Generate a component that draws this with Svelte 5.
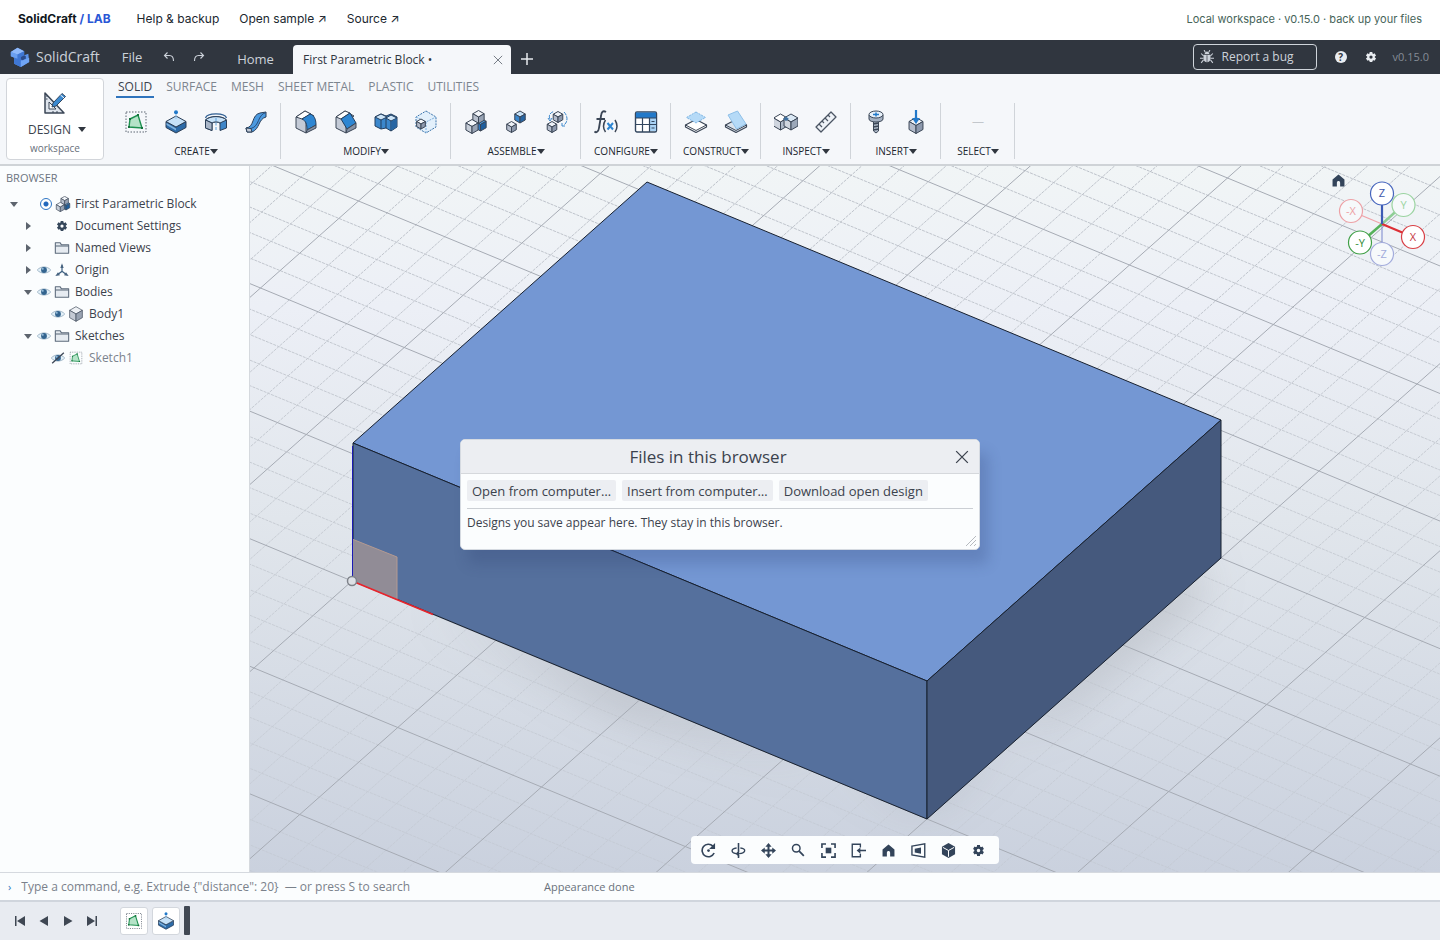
<script>
  const tabs = ['SOLID', 'SURFACE', 'MESH', 'SHEET METAL', 'PLASTIC', 'UTILITIES']
  let activeTab = $state('SOLID')
  let dialogOpen = $state(true)
  let command = $state('')

  const groups = [
    { name: 'CREATE', tools: ['sketch', 'extrude', 'revolve', 'sweep'] },
    { name: 'MODIFY', tools: ['fillet', 'chamfer', 'combine', 'shell'] },
    { name: 'ASSEMBLE', tools: ['component', 'joint', 'motion'] },
    { name: 'CONFIGURE', tools: ['parameters', 'table'] },
    { name: 'CONSTRUCT', tools: ['offset plane', 'angle plane'] },
    { name: 'INSPECT', tools: ['interference', 'measure'] },
    { name: 'INSERT', tools: ['fastener', 'import'] },
    { name: 'SELECT', tools: [] }
  ]

  const tree = [
    { label: 'First Parametric Block', icon: 'component', level: 0, arrow: 'down', radio: true },
    { label: 'Document Settings', icon: 'gear', level: 1, arrow: 'right' },
    { label: 'Named Views', icon: 'folder', level: 1, arrow: 'right' },
    { label: 'Origin', icon: 'origin', level: 1, arrow: 'right', eye: 'on' },
    { label: 'Bodies', icon: 'folder', level: 1, arrow: 'down', eye: 'on' },
    { label: 'Body1', icon: 'body', level: 2, eye: 'on' },
    { label: 'Sketches', icon: 'folder', level: 1, arrow: 'down', eye: 'on' },
    { label: 'Sketch1', icon: 'sketch', level: 2, eye: 'off', dim: true }
  ]

  const viewTools = ['orbit', 'turntable', 'pan', 'zoom', 'fit', 'look at', 'home', 'perspective', 'display', 'gear']
  const playback = ['first', 'previous', 'play', 'last']

  // Ground grid: u and v are the screen vectors of one major cell
  const origin = [352, 581]
  const u = [143.75, 59.5]
  const v = [98, -87]
  const at = (a, b) => [origin[0] + u[0] * a + v[0] * b, origin[1] + u[1] * a + v[1] * b]

  function gridPath(major) {
    let d = ''
    for (let i = -60; i <= 60; i++) {
      if ((i % 5 === 0) !== major) continue
      const n = i / 5
      d += `M${at(n, -12)}L${at(n, 12)}M${at(-12, n)}L${at(12, n)}`
    }
    return d
  }
  const majorGrid = gridPath(true)
  const minorGrid = gridPath(false)
</script>

{#snippet cube(x, y, s, top = '#eef2f7', left = '#b4bccb', right = '#8d99ad')}
  <g stroke="#3b4656" stroke-width="1" stroke-linejoin="round">
    <path d="M{x} {y - s}L{x + s * 0.87} {y - s / 2}L{x} {y}L{x - s * 0.87} {y - s / 2}Z" fill={top} />
    <path d="M{x - s * 0.87} {y - s / 2}L{x} {y}V{y + s}L{x - s * 0.87} {y + s / 2}Z" fill={left} />
    <path d="M{x + s * 0.87} {y - s / 2}L{x} {y}V{y + s}L{x + s * 0.87} {y + s / 2}Z" fill={right} />
  </g>
{/snippet}

{#snippet icon(name, size = 24)}
  <svg width={size} height={size} viewBox="0 0 24 24" fill="none" aria-hidden="true">
    {#if name === 'sketch'}
      <rect x="2" y="2" width="20" height="20" stroke="#5d6673" stroke-dasharray="1.5 1.5" />
      <path d="M6 9L14 5L18 18L5 17Z" fill="#b5e3c8" stroke="#1e9150" stroke-width="1.4" />
      <path d="M5 8h2v2H5zM13 4h2v2h-2zM17 17h2v2h-2zM4 16h2v2H4z" fill="#14733c" />
    {:else if name === 'extrude'}
      <path d="M2 11.500V17.500L12 23L22 17.500V11.500L12 17Z" fill="#2d6ba8" stroke="#2b3f58" stroke-linejoin="round" />
      <path d="M2.500 13L12 18.500V20.500L2.500 15Z" fill="#7fb2de" />
      <path d="M12 6L22 11.500L12 17L2 11.500Z" fill="#c7e2f8" stroke="#2b3f58" stroke-linejoin="round" />
      <path d="M12 1V9" stroke="#8fc0ea" />
      <circle cx="12" cy="2.2" r="2" fill="#2279c9" />
    {:else if name === 'revolve'}
      <path d="M1.500 8C3 2.500 21 2.500 22.500 8" stroke="#2f5f93" stroke-width="1.200" />
      <path d="M1.500 10C5 5.500 19 5.500 22.500 10V18L16 20.500V13C14.500 11.500 9.500 11.500 8 13V20.500L1.500 18Z" fill="#3f86c8" stroke="#2b3f58" stroke-linejoin="round" />
      <path d="M1.500 10C6 5.500 18 5.500 22.500 10L16 13C14 11.500 10 11.500 8 13Z" fill="#c7e2f8" stroke="#2b3f58" />
      <path d="M1.500 10L8 13V20.500L1.500 18Z" fill="#a9b6c8" stroke="#2b3f58" />
      <path d="M12 8V20" stroke="#5fa2dc" stroke-dasharray="3 1.500" />
    {:else if name === 'sweep'}
      <path d="M2 18C11 17 7 5 16 3L22 2L22 7C14 9 16 19 8 22L3 22Z" fill="#4b9ae0" stroke="#2b3f58" stroke-linejoin="round" />
      <path d="M22 2.500C13 5 16 16 7 18.500" stroke="#2b4f7c" />
      <path d="M2 18L7 18.500L8 22L3 22Z" fill="#c2cad6" stroke="#2b3f58" stroke-linejoin="round" />
    {:else if name === 'fillet'}
      <path d="M2 7L11 1L20 6L12 11V23L2 18Z" fill="#c3cad6" stroke="#3b4656" stroke-linejoin="round" />
      <path d="M2 7L11 1L17 4L8 9Z" fill="#fff" stroke="#3b4656" />
      <path d="M8 9L16 4C20 5 22 9 22 15L13 20C13 14 12 11 8 9Z" fill="#2e86d2" stroke="#243f5e" />
      <path d="M12 23L22 18V15L13 20Z" fill="#8692a5" stroke="#3b4656" />
    {:else if name === 'chamfer'}
      <path d="M2 7L11 1L20 6L12 11V23L2 18Z" fill="#c3cad6" stroke="#3b4656" stroke-linejoin="round" />
      <path d="M2 7L11 1L16 3L7 9Z" fill="#fff" stroke="#3b4656" />
      <path d="M7 9L16 3L22 13L13 19Z" fill="#2e86d2" stroke="#243f5e" />
      <path d="M12 23L22 18V13L13 19Z" fill="#8692a5" stroke="#3b4656" />
    {:else if name === 'combine'}
      <path d="M1 7L7 4L12 6L17 4L23 7V17L17 21L12 18L7 19L1 16Z" fill="#3b87cc" stroke="#243f5e" stroke-linejoin="round" />
      <path d="M1 7L7 4L13 7L7 10ZM12 8L17 5L23 8L17 11Z" fill="#cde5f8" stroke="#243f5e" stroke-linejoin="round" />
      <path d="M7 10V19M17 11V21M12 8V18" stroke="#243f5e" />
      <path d="M17.500 11.500L22.500 8.500V17L17.500 20Z" fill="#2765a2" />
    {:else if name === 'shell'}
      <path d="M12 1L22 7V17L12 23L2 17V7Z" fill="#e3f0fb" stroke="#3d75ab" stroke-dasharray="2 1" />
      <path d="M2 7L12 12L22 7M12 12V23" stroke="#7baede" stroke-dasharray="2 1" />
      {@render cube(7, 14, 5, '#f5f8fb', '#b4bccb', '#8d99ad')}
    {:else if name === 'component'}
      {@render cube(16.5, 14.5, 6.5, '#4aa0e8', '#2e78bf', '#1f5f9e')}
      {@render cube(14.5, 7, 6.5, '#f3f6fa', '#b8c0cd', '#98a3b4')}
      {@render cube(8, 16.5, 7, '#f3f6fa', '#c7ced8', '#98a3b4')}
    {:else if name === 'joint'}
      {@render cube(16, 7, 6, '#c7e2f8', '#3b87cc', '#2765a2')}
      {@render cube(7.5, 17, 5.5)}
    {:else if name === 'motion'}
      {@render cube(14, 7, 5.5)}
      {@render cube(8, 17, 5.5)}
      <path d="M6 9C4 5 7 2 10 1.500M20 2C24 6 24 12 20 15" stroke="#3b87cc" stroke-dasharray="4 1" />
      <path d="M4 8L6 11L8 8M18 13L18 16L21 16" stroke="#3b87cc" />
    {:else if name === 'parameters'}
      <path d="M12 2C9 0 7.500 2 7 6L5 18C4.500 22 2 23 .5 21.500M2.500 9H11" stroke="#3b4656" stroke-width="1.800" />
      <path d="M11.500 10C9 14 9 18.500 11.500 22M21 10C23.500 14 23.500 18.500 21 22" stroke="#3b4656" stroke-width="1.500" />
      <path d="M13.500 13L19 19.500M19 13L13.500 19.500" stroke="#2e86d2" stroke-width="2" />
    {:else if name === 'table'}
      <rect x="1.500" y="2" width="21" height="20" rx="1.500" fill="#fff" stroke="#33475f" stroke-width="1.400" />
      <path d="M2 2.500H22V8H2Z" fill="#2279c9" />
      <path d="M15.500 8H22V21H15.500Z" fill="#a9d2f4" />
      <path d="M2 8H22M2 14.500H22M8.500 8V22M15.500 8V22" stroke="#33475f" stroke-width="1.200" />
      <path d="M17.500 11.500H20.500M17.500 18H20.500" stroke="#33475f" />
    {:else if name === 'offset plane'}
      <path d="M1.500 15L12 9.500L22.500 15V17L12 22.500L1.500 17Z" fill="#fff" stroke="#3b4656" stroke-width="1.200" stroke-linejoin="round" />
      <path d="M1.500 15L12 20.500L22.500 15" stroke="#3b4656" />
      <path d="M12 2L21.500 7.500L12 13L2.500 7.500Z" fill="#b5daf7" stroke="#7db5e4" stroke-dasharray="2 1" />
    {:else if name === 'angle plane'}
      <path d="M1.500 15L12 9.500L22.500 15V17L12 22.500L1.500 17Z" fill="#dbe3ec" stroke="#3b4656" stroke-width="1.200" stroke-linejoin="round" />
      <path d="M1.500 15L12 20.500L22.500 15" stroke="#3b4656" />
      <path d="M4 5L13.500 1L22 14L12.500 19Z" fill="#b5daf7" stroke="#8fc0e8" />
    {:else if name === 'interference'}
      {@render cube(6.5, 12, 8, '#fff', '#cfd5de', '#aeb9c8')}
      {@render cube(17, 12, 8, '#dbe9f5', '#cfd5de', '#9ca8b9')}
      <path d="M12 6.500L15 9L12 11L9 9Z" fill="#41719f" />
    {:else if name === 'measure'}
      <path d="M2 17L17 2L22 7L7 22Z" fill="#eef2f7" stroke="#4b5563" stroke-width="1.300" stroke-linejoin="round" />
      <path d="M5 14L8 17M8 11L10 13M11 8L14 11M14 5L16 7" stroke="#4b5563" stroke-width="1.200" />
    {:else if name === 'fastener'}
      <path d="M9.500 11H14.500V21L12 23L9.500 21Z" fill="#aeb9c8" stroke="#3b4656" />
      <path d="M9 14L15 13M9 17L15 16M9 20L15 19" stroke="#3b4656" stroke-width="1.300" />
      <path d="M5 5V9C5 13 19 13 19 9V5Z" fill="#a5b1c2" stroke="#3b4656" />
      <ellipse cx="12" cy="4.500" rx="7" ry="3.500" fill="#e8f1fa" stroke="#3b4656" />
      <path d="M12 2.500V6.500M9 4.500H15" stroke="#2279c9" stroke-width="1.500" />
    {:else if name === 'import'}
      {@render cube(12, 15.500, 8)}
      <path d="M12 0V9" stroke="#2279c9" stroke-width="2.200" />
      <path d="M8 8L12 14L16 8Z" fill="#2279c9" />
    {:else if name === 'design'}
      <path d="M2 2V22H21Z" fill="#dfe5ed" stroke="#3b4656" stroke-width="1.500" stroke-linejoin="round" />
      <path d="M6 11V18H13Z" fill="#fff" stroke="#3b4656" />
      <path d="M3 5H5M3 8H4.500M10 20V22M14 20V22" stroke="#3b4656" />
      <path d="M9 16L10 12L19 2.500L22.500 5.500L13 15Z" fill="#3b8ad1" stroke="#33475f" />
      <path d="M17.500 4L21 7" stroke="#fff" />
    {:else if name === 'gear'}
      <g stroke="currentColor" stroke-width="5.500">
        <path d="M12 2V6M12 18V22M3.300 7L6.800 9M17.200 15L20.700 17M20.700 7L17.200 9M6.800 15L3.300 17" />
        <circle cx="12" cy="12" r="5.500" stroke-width="4.500" />
      </g>
    {:else if name === 'folder'}
      <path d="M2 20V4H9L11 7H22V20Z" fill="#e6ebf1" stroke="#5d6b7c" stroke-width="1.600" stroke-linejoin="round" />
      <path d="M2 9H22" stroke="#5d6b7c" stroke-width="1.600" />
    {:else if name === 'origin'}
      <path d="M12 5V14L5 19M12 14L19 19" stroke="#3d5f80" stroke-width="1.800" />
      <path d="M12 2L14.500 9H9.500ZM2 21L6 15.500L9 20ZM22 21L18 15.500L15 20Z" fill="#46627f" />
    {:else if name === 'body'}
      {@render cube(12, 12, 11, '#eef1f5', '#c4cad4', '#99a3b2')}
    {:else if name === 'eye' || name === 'eye off'}
      <path d="M.5 12C6 5 18 5 23.500 12C18 19 6 19 .5 12Z" fill="#e3f0f8" stroke="#8fa9bd" stroke-width="1.400" />
      <circle cx="12" cy="12" r="5" fill="#33648f" />
      <circle cx="10" cy="10" r="1.500" fill="#a7cce8" />
      {#if name === 'eye off'}<path d="M2 21L22 3" stroke="#3b4656" stroke-width="2.200" />{/if}
    {:else if name === 'home'}
      <path d="M12 1L23 10V23H15V16C15 12 9 12 9 16V23H1V10Z" fill="currentColor" />
    {:else if name === 'orbit'}
      <path d="M19 5A10 10 0 1 0 21 16" stroke="currentColor" stroke-width="2.600" />
      <path d="M22.500 0V9.500H13Z" fill="currentColor" />
      <circle cx="12" cy="12" r="2.200" fill="currentColor" />
    {:else if name === 'turntable'}
      <path d="M12 0V14M12 19V24" stroke="currentColor" stroke-width="2.500" />
      <path d="M9 8C-1 9 0 16 8 17M15 8C25 9 24 16 13 17" stroke="currentColor" stroke-width="2.200" />
      <path d="M13 12V22L7 17Z" fill="currentColor" />
    {:else if name === 'pan'}
      <path d="M12 3V21M3 12H21" stroke="currentColor" stroke-width="3.200" />
      <path d="M12 0L17 6H7ZM12 24L17 18H7ZM0 12L6 7V17ZM24 12L18 7V17Z" fill="currentColor" />
    {:else if name === 'zoom'}
      <circle cx="9" cy="9" r="6.500" stroke="currentColor" stroke-width="2.500" />
      <path d="M14 14L22 22" stroke="currentColor" stroke-width="3" />
    {:else if name === 'fit'}
      <path d="M1.500 8V1.500H8M16 1.500H22.500V8M22.500 16V22.500H16M8 22.500H1.500V16" stroke="currentColor" stroke-width="2.600" />
      <rect x="7.500" y="7.500" width="9" height="9" fill="currentColor" />
    {:else if name === 'look at'}
      <path d="M15 7V2H2V22H15V17" stroke="currentColor" stroke-width="2.200" />
      <path d="M24 12H13" stroke="currentColor" stroke-width="2.500" />
      <path d="M15 7V17L9 12Z" fill="currentColor" />
    {:else if name === 'perspective'}
      <path d="M1.500 5L22 1.500V22.500L1.500 19Z" stroke="currentColor" stroke-width="2.200" />
      <path d="M6 9L16 7V17L6 15Z" fill="currentColor" />
    {:else if name === 'display'}
      <path d="M12 0L22.500 6V18L12 24L1.500 18V6Z" fill="currentColor" />
      <path d="M3 7L12 12L21 7M12 12V22" stroke="#fff" stroke-width="1.600" />
    {:else if name === 'bug'}
      <path d="M6 8H18V15C18 23 6 23 6 15ZM8 7C8 1 16 1 16 7Z" fill="currentColor" />
      <path d="M6 10L2 6M18 10L22 6M6 14H0M18 14H24M6 17L2 22M18 17L22 22M9 4L7 0M15 4L17 0" stroke="currentColor" stroke-width="1.800" />
      <path d="M12 9V21" stroke="#30363f" stroke-width="1.200" />
    {:else if name === 'undo' || name === 'redo'}
      <g transform={name === 'redo' ? 'matrix(-1 0 0 1 24 0)' : undefined} stroke="currentColor" stroke-width="2.200">
        <path d="M3 9H13C19 9 21 13 21 20M9 3L3 9L9 15" />
      </g>
    {:else if name === 'logo'}
      <path d="M1 6L9 1L17 5V10L22 8L23 18L13 24L5 20V13L1 11Z" fill="#5c93ea" />
      <path d="M1 6L9 1L17 5L9 9Z" fill="#8fb9fa" />
      <path d="M1 6L9 9V14L1 11Z" fill="#6a9ff0" />
      <path d="M9 9L17 5V10L13 12V24L5 20V13L9 14Z" fill="#3f77d4" />
      <path d="M13 12L17 10L19 11V14L15 16L13 15Z" fill="#2b4c8c" />
      <path d="M13 17L23 13V18L13 24Z" fill="#70a5f5" />
    {:else if name === 'first'}
      <path d="M2 2H5V22H2ZM22 2V22L6 12Z" fill="currentColor" />
    {:else if name === 'previous'}
      <path d="M20 2V22L3 12Z" fill="currentColor" />
    {:else if name === 'play'}
      <path d="M4 2V22L21 12Z" fill="currentColor" />
    {:else if name === 'last'}
      <path d="M22 2H19V22H22ZM2 2V22L18 12Z" fill="currentColor" />
    {:else if name === 'close'}
      <path d="M2 2L22 22M22 2L2 22" stroke="currentColor" stroke-width="2.200" />
    {/if}
  </svg>
{/snippet}

<div class="app">
  <header class="site-bar">
    <a class="brand" href="#lab">SolidCraft <span>/ LAB</span></a>
    <a href="#help">Help &amp; backup</a>
    <a href="#sample">Open sample ↗</a>
    <a href="#source">Source ↗</a>
    <p>Local workspace · v0.15.0 · back up your files</p>
  </header>

  <div class="title-bar">
    <span class="logo">{@render icon('logo', 20)} SolidCraft</span>
    <button class="file">File</button>
    <button class="history" aria-label="Undo">{@render icon('undo', 12)}</button>
    <button class="history" aria-label="Redo">{@render icon('redo', 12)}</button>
    <button class="home-tab">Home</button>
    <div class="doc-tab">
      <span>First Parametric Block •</span>
      <button aria-label="Close document">{@render icon('close', 10)}</button>
    </div>
    <button class="new-tab" aria-label="New document">
      <svg width="14" height="14" viewBox="0 0 14 14" aria-hidden="true"><path d="M7 1V13M1 7H13" stroke="currentColor" stroke-width="1.500" /></svg>
    </button>
    <div class="title-right">
      <button class="report">{@render icon('bug', 14)} Report a bug</button>
      <button class="help" aria-label="Help">?</button>
      <button class="prefs" aria-label="Preferences">{@render icon('gear', 12)}</button>
      <span class="version">v0.15.0</span>
    </div>
  </div>

  <div class="ribbon">
    <button class="workspace">
      {@render icon('design', 24)}
      <span class="name">DESIGN <i class="caret"></i></span>
      <small>workspace</small>
    </button>
    <div class="ribbon-body">
      <nav class="tabs">
        {#each tabs as tab}
          <button class:active={activeTab === tab} onclick={() => (activeTab = tab)}>{tab}</button>
        {/each}
      </nav>
      <div class="groups">
        {#each groups as group}
          <div class="group">
            <div class="tools">
              {#each group.tools as tool}
                <button aria-label={tool}>{@render icon(tool, 24)}</button>
              {:else}
                <span class="empty">—</span>
              {/each}
            </div>
            <button class="group-name">{group.name}<i class="caret"></i></button>
          </div>
        {/each}
      </div>
    </div>
  </div>

  <main>
    <aside>
      <h2>BROWSER</h2>
      <ul>
        {#each tree as node}
          <li class="level-{node.level}" class:dim={node.dim}>
            <span class="arrow">{#if node.arrow}<i class={node.arrow}></i>{/if}</span>
            <span class="eye">
              {#if node.radio}
                <input type="radio" checked aria-label="Activate {node.label}" />
              {:else if node.eye}
                {@render icon(node.eye === 'on' ? 'eye' : 'eye off', 14)}
              {/if}
            </span>
            <span class="kind">{@render icon(node.icon, node.icon === 'gear' ? 12 : node.icon === 'sketch' ? 14 : 16)}</span>
            {node.label}
          </li>
        {/each}
      </ul>
    </aside>

    <section class="viewport">
      <svg class="scene" viewBox="250 166 1190 706" preserveAspectRatio="xMidYMid slice" aria-hidden="true">
        <defs>
          <linearGradient id="ground" x1="0" y1="0" x2="0" y2="1">
            <stop offset="0" stop-color="#f1f5f6" />
            <stop offset="0.2" stop-color="#eceff6" />
            <stop offset="0.5" stop-color="#e1e6ec" />
            <stop offset="1" stop-color="#cad1de" />
          </linearGradient>
          <linearGradient id="fade" x1="0" y1="0" x2="0" y2="1">
            <stop offset="0" stop-color="#fff" />
            <stop offset="1" stop-color="#fff" stop-opacity="0.4" />
          </linearGradient>
          <mask id="minor-mask" maskUnits="userSpaceOnUse" x="250" y="166" width="1190" height="706">
            <rect x="250" y="166" width="1190" height="706" fill="url(#fade)" />
          </mask>
          <filter id="soft" x="-20%" y="-20%" width="140%" height="140%"><feGaussianBlur stdDeviation="24" /></filter>
        </defs>
        <rect x="250" y="166" width="1190" height="706" fill="url(#ground)" />
        <path d="M430 600L927 800L1190 560L1200 590L1060 705L900 780L620 705Z" fill="#9b9fa6" opacity="0.7" filter="url(#soft)" />
        <g mask="url(#minor-mask)"><path d={minorGrid} stroke="#bcc1c9" stroke-width="1" stroke-dasharray="3 1" /></g>
        <path d={majorGrid} stroke="#a6abb4" stroke-width="1" />
        <g stroke="#17202f" stroke-width="1" stroke-linejoin="round">
          <path d="M647 182L1221 420L927 681L353 443Z" fill="#7497d3" />
          <path d="M353 443L927 681V819L353 581Z" fill="#55709d" />
          <path d="M927 681L1221 420V558L927 819Z" fill="#45597d" />
        </g>
        <path d="M352 539L397 557V600L352 581Z" fill="#918c96" />
        <path d="M352 539L397 557V600" fill="none" stroke="#b49a92" />
        <path d="M352.500 446V581" stroke="#1b1bb5" stroke-width="1" />
        <path d="M352 581L433 614.500" stroke="#e8242c" stroke-width="1.800" />
        <circle cx="352" cy="581" r="4.500" fill="#dde1e6" stroke="#7d8289" stroke-width="1.500" />
      </svg>

      <div class="view-cube">
        <button aria-label="Home view">{@render icon('home', 13)}</button>
        <svg width="90" height="90" viewBox="0 0 90 90" aria-label="View orientation">
          <g stroke-width="1.200">
            <path d="M45 45L14 32" stroke="#f0a3a8" />
            <path d="M45 45L66 26" stroke="#8fce96" stroke-width="2.500" />
            <path d="M45 45V75" stroke="#8a97d4" />
            <g fill="#f6f9fb">
              <circle cx="14" cy="32" r="11.500" stroke="#eda1a6" />
              <circle cx="66.500" cy="26" r="11.500" stroke="#9bd4a1" />
              <circle cx="45" cy="75" r="11.500" stroke="#a3acdc" />
            </g>
            <path d="M45 45L23 64" stroke="#55b159" stroke-width="2.500" />
            <path d="M45 45L76 58" stroke="#dd2f35" stroke-width="2.200" />
            <path d="M45 45V14" stroke="#3d5bb5" stroke-width="2.200" />
            <g fill="#fff">
              <circle cx="23" cy="63.500" r="11.500" stroke="#3f9f46" />
              <circle cx="76" cy="58" r="11.500" stroke="#d93f45" />
              <circle cx="45" cy="14.500" r="11.500" stroke="#4665bd" />
            </g>
          </g>
          <g text-anchor="middle">
            <text x="14" y="36" fill="#eda1a6">-X</text>
            <text x="66.500" y="30" fill="#9bd4a1">Y</text>
            <text x="45" y="79" fill="#a3acdc">-Z</text>
            <text x="23" y="68" fill="#2f8a37">-Y</text>
            <text x="76" y="62" fill="#c5383f">X</text>
            <text x="45" y="18" fill="#3d57ac">Z</text>
          </g>
        </svg>
      </div>

      <div class="view-tools">
        {#each viewTools as tool}
          <button aria-label={tool}>{@render icon(tool, tool === 'gear' || tool === 'home' ? 13 : tool === 'zoom' ? 14 : 15)}</button>
        {/each}
      </div>
    </section>
  </main>

  <div class="command-bar">
    <label>
      <span>›</span>
      <input type="text" bind:value={command} aria-label="Command" placeholder={'Type a command, e.g. Extrude {"distance": 20}  — or press S to search'} />
    </label>
    <output>Appearance done</output>
  </div>

  <footer>
    {#each playback as step}
      <button class="step" aria-label={step}>{@render icon(step, 12)}</button>
    {/each}
    <div class="features">
      <button aria-label="Sketch1">{@render icon('sketch', 18)}</button>
      <button aria-label="Extrude1">{@render icon('extrude', 18)}</button>
      <i class="marker"></i>
    </div>
  </footer>

  {#if dialogOpen}
    <div class="dialog" role="dialog" aria-labelledby="files-title">
      <div class="dialog-head">
        <h1 id="files-title">Files in this browser</h1>
        <button aria-label="Close" onclick={() => (dialogOpen = false)}>{@render icon('close', 14)}</button>
      </div>
      <div class="dialog-body">
        <div class="actions">
          <button>Open from computer…</button>
          <button>Insert from computer…</button>
          <button>Download open design</button>
        </div>
        <p>Designs you save appear here. They stay in this browser.</p>
      </div>
      <svg class="grip" width="12" height="12" viewBox="0 0 12 12" aria-hidden="true"><path d="M1 11L11 1M5 11L11 5M9 11L11 9" stroke="#b6babf" /></svg>
    </div>
  {/if}
</div>

<style>
  :global(body) {
    margin: 0;
  }

  .app {
    position: relative;
    display: flex;
    flex-direction: column;
    height: 100vh;
    overflow: hidden;
    background: #fbfdfe;
    color: #3b424d;
    font: 12px/16px 'Open Sans', 'Noto Sans', sans-serif;
  }

  .app :global(svg) {
    display: block;
    flex: none;
  }

  button {
    display: flex;
    align-items: center;
    justify-content: center;
    padding: 0;
    border: 0;
    background: none;
    color: inherit;
    font: inherit;
    cursor: pointer;
  }

  .site-bar {
    display: flex;
    align-items: center;
    gap: 20px;
    height: 40px;
    flex: none;
    box-sizing: border-box;
    padding: 0 18px 3px;
    background: #fff;
    font: 12px/16px Inter, sans-serif;
  }

  .site-bar a {
    color: #20272f;
    text-decoration: none;
  }

  .site-bar .brand {
    margin-right: 6px;
    color: #101820;
    font-weight: 700;
  }

  .brand span {
    color: #2957d6;
  }

  .site-bar p {
    margin: 0 0 0 auto;
    color: #466459;
    font-size: 11px;
  }

  .title-bar {
    display: flex;
    align-items: center;
    height: 34px;
    flex: none;
    background: #30363f;
    color: #ccd2da;
    font-size: 13px;
  }

  .logo {
    display: flex;
    align-items: center;
    gap: 6px;
    width: 100px;
    padding-left: 10px;
    font-size: 14px;
  }

  .file {
    width: 44px;
  }

  .history {
    width: 30px;
  }

  .home-tab {
    align-self: flex-end;
    width: 75px;
    height: 30px;
    margin-left: 4px;
  }

  .doc-tab {
    display: flex;
    align-items: center;
    justify-content: space-between;
    align-self: flex-end;
    box-sizing: border-box;
    width: 218px;
    height: 29px;
    padding: 0 8px 0 10px;
    border-radius: 4px 4px 0 0;
    background: #f5f7fa;
    color: #30363f;
    font-size: 12px;
  }

  .doc-tab button {
    color: #6b727c;
  }

  .new-tab {
    width: 32px;
    height: 34px;
    padding-top: 4px;
    color: #e6eaee;
  }

  .title-right {
    display: flex;
    align-items: center;
    gap: 14px;
    margin-left: auto;
    padding-right: 11px;
  }

  .report {
    justify-content: flex-start;
    gap: 8px;
    width: 124px;
    height: 26px;
    padding-left: 6px;
    border: 1px solid #cfd4da;
    border-radius: 4px;
    box-sizing: border-box;
    font-size: 12px;
  }

  .help {
    width: 12px;
    height: 12px;
    margin-left: 4px;
    border-radius: 50%;
    background: #e9edf1;
    color: #30363f;
    font-size: 10px;
    font-weight: 700;
  }

  .prefs {
    width: 20px;
    color: #e9edf1;
  }

  .version {
    margin-left: -2px;
    color: #858c96;
    font-size: 11px;
  }

  .ribbon {
    display: flex;
    flex: none;
    height: 90px;
    border-bottom: 2px solid #cfd3d7;
    background: #f5f7fa;
  }

  .workspace {
    flex-direction: column;
    gap: 8px;
    box-sizing: border-box;
    width: 98px;
    height: 82px;
    margin: 4px 0 0 6px;
    padding-top: 7px;
    border: 1px solid #d2d5da;
    border-radius: 4px;
    background: #fff;
  }

  .workspace .name {
    display: flex;
    align-items: center;
    gap: 7px;
    margin-left: 4px;
    line-height: 14px;
  }

  .workspace small {
    margin-top: -4px;
    color: #68707b;
    font-size: 10px;
    line-height: 14px;
  }

  .caret {
    border: 4px solid transparent;
    border-top: 5px solid #30363f;
    border-bottom: 0;
  }

  .tabs {
    display: flex;
    gap: 10px;
    height: 24px;
    padding-left: 12px;
  }

  .tabs button {
    padding: 4px 2px 0;
    border-bottom: 2px solid transparent;
    color: #7d858f;
    font-size: 12px;
    box-sizing: border-box;
  }

  .tabs .active {
    border-color: #2f74bd;
    color: #3b424d;
  }

  .groups {
    display: flex;
    padding: 5px 0 0 7px;
  }

  .group {
    display: flex;
    flex-direction: column;
    box-sizing: border-box;
    min-width: 74px;
    height: 56px;
    padding: 0 4px 0 5px;
    border-right: 1px solid #d0d4d9;
  }

  .tools {
    display: flex;
    justify-content: center;
    height: 37px;
    flex: none;
  }

  .tools button {
    width: 40px;
  }

  .empty {
    align-self: center;
    color: #c3c7cc;
  }

  .group-name {
    height: 22px;
    flex: none;
    font-size: 10px;
    color: #20262e;
  }

  main {
    display: flex;
    flex: 1;
    min-height: 0;
  }

  aside {
    flex: none;
    box-sizing: border-box;
    width: 250px;
    border-right: 1px solid #d5d9de;
    background: #fbfdfe;
  }

  h2 {
    margin: 4px 6px 7px;
    color: #6c747e;
    font-size: 11px;
    font-weight: 400;
    line-height: 16px;
  }

  ul {
    margin: 0;
    padding: 0;
    list-style: none;
  }

  li {
    display: flex;
    align-items: center;
    height: 22px;
    padding-left: 6px;
  }

  li.level-1 {
    padding-left: 20px;
  }

  li.level-2 {
    padding-left: 34px;
  }

  li.dim {
    color: #7b838d;
  }

  .arrow,
  .eye,
  .kind {
    display: flex;
    align-items: center;
    justify-content: center;
    width: 16px;
  }

  .kind {
    width: 20px;
    margin-right: 3px;
    color: #35465a;
  }

  .level-0 .eye {
    margin-left: 16px;
  }

  .level-0 .kind {
    width: 18px;
  }

  .arrow i {
    border: 4px solid transparent;
  }

  .arrow .down {
    border-top: 5px solid #5d646e;
    border-bottom: 0;
  }

  .arrow .right {
    border-left: 5px solid #5d646e;
    border-right: 0;
  }

  input[type='radio'] {
    width: 12px;
    height: 12px;
    margin: 0;
    border: 1px solid #2e75c4;
    border-radius: 50%;
    appearance: none;
    background: radial-gradient(circle, #2268bd 2px, #fff 3px);
  }

  .viewport {
    position: relative;
    flex: 1;
    min-width: 0;
    overflow: hidden;
  }

  .scene {
    width: 100%;
    height: 100%;
  }

  .view-cube {
    position: absolute;
    top: 8px;
    right: 13px;
    display: flex;
    align-items: flex-start;
    color: #33445a;
  }

  .view-cube button {
    width: 14px;
    margin-right: -8px;
  }

  .view-cube > svg {
    margin-top: 5px;
  }

  .view-cube text {
    font-size: 11px;
  }

  .view-tools {
    position: absolute;
    bottom: 8px;
    left: 50%;
    display: flex;
    padding: 0 6px 0 2px;
    border-radius: 4px;
    background: #fbfdfe;
    color: #33445a;
    transform: translateX(-50%);
  }

  .view-tools button {
    width: 30px;
    height: 28px;
  }

  .command-bar {
    display: flex;
    align-items: center;
    flex: none;
    height: 27px;
    border-top: 1px solid #d5d9df;
    border-bottom: 2px solid #d0d5dd;
    color: #69717b;
    font-size: 11px;
  }

  .command-bar label {
    display: flex;
    align-items: center;
    gap: 10px;
    width: 536px;
    padding-left: 8px;
  }

  .command-bar label span {
    color: #2f74bd;
  }

  .command-bar input {
    flex: 1;
    padding: 0;
    border: 0;
    outline: 0;
    background: none;
    font: 12px/16px 'Open Sans', 'Noto Sans', sans-serif;
  }

  .command-bar input::placeholder {
    color: #7a818b;
    opacity: 1;
  }

  footer {
    display: flex;
    align-items: center;
    flex: none;
    box-sizing: border-box;
    height: 38px;
    padding: 0 0 1px 8px;
    background: #e8ebf1;
    color: #3f4753;
  }

  .step {
    width: 24px;
    height: 24px;
  }

  .features {
    display: flex;
    align-items: center;
    gap: 4px;
    margin-left: 16px;
  }

  .features button {
    box-sizing: border-box;
    width: 28px;
    height: 28px;
    border: 1px solid #d3d7dd;
    border-radius: 3px;
    background: #fff;
  }

  .marker {
    width: 6px;
    height: 29px;
    border-radius: 1px;
    background: #424954;
  }

  .dialog {
    position: absolute;
    top: 439px;
    left: 50%;
    width: 520px;
    box-sizing: border-box;
    border: 1px solid #d5dae1;
    border-radius: 5px;
    background: #fbfdfe;
    box-shadow: 8px 14px 14px rgba(40, 60, 110, 0.22);
    transform: translateX(-50%);
  }

  .dialog-head {
    display: flex;
    align-items: center;
    height: 33px;
    padding-right: 10px;
    border-bottom: 1px solid #d5d8dc;
    border-radius: 4px 4px 0 0;
    background: #eceef2;
  }

  h1 {
    flex: 1;
    margin: 0;
    font-size: 17px;
    font-weight: 400;
    line-height: 22px;
    text-align: center;
  }

  .dialog-body {
    padding: 6px 6px 18px;
  }

  .actions {
    display: flex;
    gap: 6px;
    padding-bottom: 7px;
    border-bottom: 1px solid #cbcfd4;
    font-size: 13px;
  }

  .actions button {
    height: 21px;
    padding: 0 5px;
    border-radius: 2px;
    background: #eceef2;
  }

  .dialog p {
    margin: 6px 0 0;
  }

  .grip {
    position: absolute;
    right: 2px;
    bottom: 2px;
  }
</style>
